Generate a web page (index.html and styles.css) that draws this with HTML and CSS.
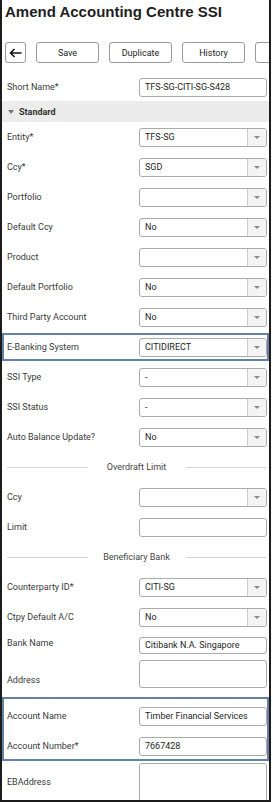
FILE: index.html
```html
<!DOCTYPE html>
<html lang="en">
<head>
    <meta charset="UTF-8">
    <meta name="viewport" content="width=device-width, initial-scale=1.0">
    <title>Amend Accounting Centre SSI</title>
    <link rel="stylesheet" href="styles.css">
</head>
<body>
    <div class="frame">
        <h1 class="title">Amend Accounting Centre SSI</h1>

        <div class="toolbar">
            <button class="btn btn-back">
                <svg width="13" height="10" viewBox="0 0 13 10"><path d="M12.5 5H1.5M5.5 1L1.5 5l4 4" fill="none" stroke="#111" stroke-width="1.6"/></svg>
            </button>
            <button class="btn">Save</button>
            <button class="btn">Duplicate</button>
            <button class="btn">History</button>
            <button class="btn"></button>
        </div>

        <div class="row row-first">
            <span class="label">Short Name*</span>
            <div class="ctrl"><span class="val">TFS-SG-CITI-SG-S428</span></div>
        </div>

        <div class="section-head">Standard</div>

        <div class="row">
            <span class="label">Entity*</span>
            <div class="ctrl select"><span class="val">TFS-SG</span><span class="arr"></span></div>
        </div>
        <div class="row">
            <span class="label">Ccy*</span>
            <div class="ctrl select"><span class="val">SGD</span><span class="arr"></span></div>
        </div>
        <div class="row">
            <span class="label">Portfolio</span>
            <div class="ctrl select"><span class="val"></span><span class="arr"></span></div>
        </div>
        <div class="row">
            <span class="label">Default Ccy</span>
            <div class="ctrl select"><span class="val">No</span><span class="arr"></span></div>
        </div>
        <div class="row">
            <span class="label">Product</span>
            <div class="ctrl select"><span class="val"></span><span class="arr"></span></div>
        </div>
        <div class="row">
            <span class="label">Default Portfolio</span>
            <div class="ctrl select"><span class="val">No</span><span class="arr"></span></div>
        </div>
        <div class="row">
            <span class="label">Third Party Account</span>
            <div class="ctrl select"><span class="val">No</span><span class="arr"></span></div>
        </div>

        <div class="hl hl-one">
            <div class="row">
                <span class="label">E-Banking System</span>
                <div class="ctrl select"><span class="val">CITIDIRECT</span><span class="arr"></span></div>
            </div>
        </div>

        <div class="row">
            <span class="label">SSI Type</span>
            <div class="ctrl select"><span class="val">-</span><span class="arr"></span></div>
        </div>
        <div class="row">
            <span class="label">SSI Status</span>
            <div class="ctrl select"><span class="val">-</span><span class="arr"></span></div>
        </div>
        <div class="row">
            <span class="label">Auto Balance Update?</span>
            <div class="ctrl select"><span class="val">No</span><span class="arr"></span></div>
        </div>

        <div class="divider"><span class="line"></span><span class="divider-text">Overdraft Limit</span><span class="line"></span></div>

        <div class="row">
            <span class="label">Ccy</span>
            <div class="ctrl select"><span class="val"></span><span class="arr"></span></div>
        </div>
        <div class="row">
            <span class="label">Limit</span>
            <div class="ctrl"><span class="val"></span></div>
        </div>

        <div class="divider"><span class="line"></span><span class="divider-text">Beneficiary Bank</span><span class="line"></span></div>

        <div class="row">
            <span class="label">Counterparty ID*</span>
            <div class="ctrl select"><span class="val">CITI-SG</span><span class="arr"></span></div>
        </div>
        <div class="row">
            <span class="label">Ctpy Default A/C</span>
            <div class="ctrl select"><span class="val">No</span><span class="arr"></span></div>
        </div>
        <div class="row row-short">
            <span class="label">Bank Name</span>
            <div class="ctrl"><span class="val">Citibank N.A. Singapore</span></div>
        </div>
        <div class="row row-area">
            <span class="label">Address</span>
            <div class="ctrl area"></div>
        </div>

        <div class="hl hl-two">
            <div class="row">
                <span class="label">Account Name</span>
                <div class="ctrl"><span class="val">Timber Financial Services</span></div>
            </div>
            <div class="row">
                <span class="label">Account Number*</span>
                <div class="ctrl"><span class="val">7667428</span></div>
            </div>
        </div>

        <div class="row row-area row-last">
            <span class="label">EBAddress</span>
            <div class="ctrl area"></div>
        </div>
    </div>
</body>
</html>
```

FILE: styles.css
```css
body {
    margin: 0;
    font-family: Roboto, 'Liberation Sans', sans-serif;
    color: #333;
    background: #fff;
}
.frame {
    width: 267px;
    height: 800px;
    border: 2px solid #1c1c1c;
    border-top: 0;
    overflow: hidden;
}
.title {
    margin: 0;
    padding: 3px 0 0 3px;
    font: bold 15px/18px 'Liberation Sans', Arial, sans-serif;
    color: #1e1e1e;
    white-space: nowrap;
}
.toolbar {
    display: flex;
    gap: 10px;
    margin-top: 21px;
    padding-left: 3px;
}
.btn {
    flex-shrink: 0;
    width: 63px;
    height: 21px;
    padding: 0;
    border: 1px solid #9a9a9a;
    border-radius: 3px;
    background: #fff;
    font-family: Roboto, sans-serif;
    font-size: 9px;
    color: #222;
}
.btn-back {
    width: 21px;
    display: flex;
    align-items: center;
    justify-content: center;
}
.row {
    display: grid;
    grid-template-columns: 132px 128px;
    align-items: start;
    height: 30px;
    padding: 6px 0 0 5px;
    box-sizing: border-box;
}
.row-first {
    margin-top: 9px;
    height: 29px;
}
.label {
    font-size: 9px;
    line-height: 19px;
    color: #3a3a3a;
    white-space: nowrap;
}
.ctrl {
    height: 19px;
    box-sizing: border-box;
    border: 1px solid #aaa;
    border-radius: 3px;
    background: #fff;
    font-size: 9px;
    line-height: 17px;
    color: #1e1e1e;
    overflow: hidden;
}
.val {
    padding-left: 5px;
    white-space: nowrap;
}
.select {
    display: flex;
}
.select .val {
    flex: 1;
}
.arr {
    width: 19px;
    box-sizing: border-box;
    border-left: 1px solid #ccc;
    background: #f4f4f4;
    display: flex;
    align-items: center;
    justify-content: center;
}
.arr::before {
    content: "";
    border-left: 3px solid transparent;
    border-right: 3px solid transparent;
    border-top: 3px solid #8a8a8a;
}
.section-head {
    height: 21px;
    background: #ececec;
    display: flex;
    align-items: center;
    gap: 5px;
    padding-left: 6px;
    font-size: 9px;
    font-weight: bold;
    color: #333;
}
.section-head::before {
    content: "";
    border-left: 3px solid transparent;
    border-right: 3px solid transparent;
    border-top: 4px solid #777;
}
.divider {
    display: grid;
    grid-template-columns: 1fr 98px 1fr;
    align-items: center;
    height: 30px;
    padding: 0 3px 0 5px;
}
.line {
    height: 1px;
    background: #d4d4d4;
}
.divider-text {
    text-align: center;
    font-size: 9px;
    color: #444;
}
.hl {
    border: 2px solid #6382a6;
}
.hl .row {
    padding-left: 3px;
}
.hl-one {
    margin: 1px 0;
    height: 28px;
    box-sizing: border-box;
}
.hl-one .row {
    height: 24px;
    padding-top: 3px;
}
.hl-two .row {
    padding-top: 8px;
}
.row-short {
    height: 24px;
    padding-top: 5px;
}
.row-short .label {
    line-height: 12px;
}
.row-short .ctrl {
    height: 17px;
    line-height: 15px;
}
.row-area {
    height: 41px;
    padding-top: 4px;
}
.row-area .label {
    padding-top: 14px;
    line-height: 12px;
}
.area {
    height: 28px;
}
.row-last {
    padding-top: 2px;
}
.row-last .label {
    padding-top: 13px;
}
.row-last .area {
    height: 40px;
}
```
